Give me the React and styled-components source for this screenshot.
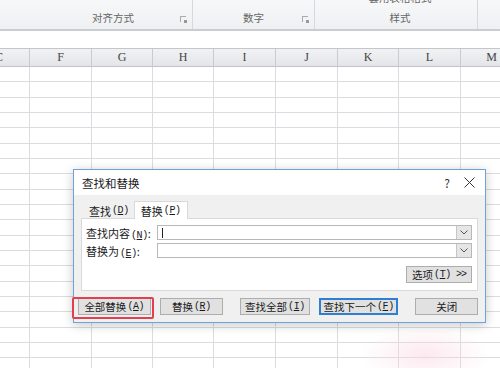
import React from "react";
import styled, { createGlobalStyle } from "styled-components";

const Global = createGlobalStyle`
  html, body { margin: 0; padding: 0; background: #fff; }
  body { font-family: "Noto Sans CJK SC", "Liberation Sans", sans-serif; }
`;

const Page = styled.div`
  position: relative;
  width: 500px;
  height: 368px;
  overflow: hidden;
  background: #fff;
`;

const Ribbon = styled.div`
  display: flex;
  height: 29px;
  background: linear-gradient(#f7f8f9, #eef0f2);
  border-bottom: 2px solid #c9ccd0;
  color: #666;
  font-size: 10.5px;
`;

const Group = styled.div`
  position: relative;
  width: ${(p) => p.$w}px;
  border-right: 1px solid #d6d9dc;
  box-sizing: border-box;
  display: flex;
  align-items: flex-end;
  justify-content: center;
  padding-left: ${(p) => p.$pl || 0}px;
  padding-bottom: 4px;
`;

const GroupLabel = styled.span`
  line-height: 14px;
`;

const TopCut = styled.span`
  position: absolute;
  top: -8px;
  left: 0;
  right: 0;
  text-align: center;
  padding-left: ${(p) => p.$pl || 0}px;
  line-height: 12px;
`;

const Launcher = styled.span`
  position: absolute;
  right: 6px;
  bottom: 7px;
  width: 5px;
  height: 5px;
  border-left: 1px solid #aaa;
  border-top: 1px solid #aaa;
  &::after {
    content: "";
    position: absolute;
    right: -1px;
    bottom: -1px;
    width: 3px;
    height: 3px;
    background: #999;
  }
`;

const FormulaGap = styled.div`
  height: 17px;
  background: #fff;
  border-bottom: 1px solid #c3c6ca;
`;

const Sheet = styled.div`
  margin-left: -31px;
  display: grid;
  grid-template-columns: 61px 62px 61px 61px 62px 62px 61px 62px 62px;
`;

const HeadCell = styled.div`
  height: 17px;
  border-right: 1px solid #c8cbcf;
  border-bottom: 1px solid #c0c3c7;
  background: linear-gradient(#f1f2f4, #e3e5e8);
  display: flex;
  align-items: center;
  justify-content: center;
  font-family: "Liberation Serif", "DejaVu Serif", serif;
  font-size: 12px;
  color: #444;
`;

const Cell = styled.div`
  height: ${(p) => (p.$tall ? 15 : 14)}px;
  border-right: 1px solid #dadcdf;
  border-bottom: 1px solid #dadcdf;
  background: #fff;
`;

const Dialog = styled.div`
  position: absolute;
  left: 73px;
  top: 169px;
  width: 413px;
  height: 154px;
  box-sizing: border-box;
  border: 1px solid #6ea2d8;
  background: #f0f0f0;
  box-shadow: 0 2px 10px rgba(0, 0, 0, 0.22);
  display: flex;
  flex-direction: column;
  font-size: 11px;
  color: #1a1a1a;
`;

const TitleBar = styled.div`
  height: 25px;
  background: #fff;
  display: flex;
  align-items: center;
  padding-left: 8px;
  font-size: 11.5px;
`;

const Title = styled.span`
  flex: 1;
`;

const TitleBtn = styled.span`
  width: ${(p) => p.$w}px;
  display: flex;
  justify-content: center;
  align-items: center;
  font-size: 12px;
  color: #333;
`;

const Body = styled.div`
  flex: 1;
  padding: 5px 7px 0 7px;
  display: flex;
  flex-direction: column;
`;

const Tabs = styled.div`
  display: flex;
  height: 18px;
  padding-left: 5px;
  align-items: flex-end;
`;

const Tab = styled.div`
  height: ${(p) => (p.$active ? 18 : 16)}px;
  box-sizing: border-box;
  padding: 0 ${(p) => (p.$active ? 6 : 2)}px;
  display: flex;
  align-items: center;
  background: ${(p) => (p.$active ? "#fff" : "#f0f0f0")};
  border: 1px solid ${(p) => (p.$active ? "#d9d9d9" : "transparent")};
  border-bottom: none;
  margin-bottom: ${(p) => (p.$active ? -1 : 0)}px;
  margin-left: ${(p) => (p.$active ? 2 : 0)}px;
  position: relative;
  z-index: 1;
  font-size: 11px;
`;

const Panel = styled.div`
  height: 73px;
  box-sizing: border-box;
  background: #fff;
  border: 1px solid #d9d9d9;
  padding: 6px 5px 0 4px;
  display: flex;
  flex-direction: column;
  gap: 3px;
`;

const FieldRow = styled.div`
  display: flex;
  align-items: center;
  height: 15px;
`;

const FieldLabel = styled.span`
  width: 71px;
  font-size: 11px;
  white-space: nowrap;
`;

const Combo = styled.div`
  flex: 1;
  height: 15px;
  box-sizing: border-box;
  border: 1px solid #b8b8b8;
  display: flex;
  align-items: center;
  padding-left: 4px;
  position: relative;
`;

const Caret = styled.span`
  width: 1px;
  height: 10px;
  background: #222;
`;

const DropBtn = styled.span`
  position: absolute;
  right: 0;
  top: 0;
  bottom: 0;
  width: 14px;
  background: #e6e6e6;
  border-left: 1px solid #c6c6c6;
  display: flex;
  align-items: center;
  justify-content: center;
`;

const OptionsRow = styled.div`
  display: flex;
  justify-content: flex-end;
  margin-top: 5px;
`;

const Button = styled.div`
  width: ${(p) => p.$w}px;
  height: 17px;
  box-sizing: border-box;
  background: #e1e1e1;
  border: ${(p) => (p.$primary ? "2px solid #2f7fd0" : "1px solid #adadad")};
  display: flex;
  align-items: center;
  justify-content: center;
  font-size: 10.5px;
  white-space: nowrap;
  margin-left: ${(p) => p.$ml || 0}px;
`;

const ButtonRow = styled.div`
  display: flex;
  margin-top: 7px;
  margin-left: -3px;
`;

const Paren = styled.span`
  font-family: "Liberation Mono", "DejaVu Sans Mono", monospace;
  font-size: 10px;
  letter-spacing: -0.4px;
  margin-left: 1px;
`;

const Key = styled.span`
  text-decoration: underline;
`;

const Arrows = styled.span`
  font-family: "Liberation Mono", "DejaVu Sans Mono", monospace;
  font-size: 10px;
  margin-left: 5px;
  letter-spacing: -1px;
`;

const Highlight = styled.div`
  position: absolute;
  left: 72px;
  top: 297px;
  width: 82px;
  height: 22px;
  box-sizing: border-box;
  border: 2.5px solid #e2404f;
  border-radius: 2px;
`;

const Smear = styled.div`
  position: absolute;
  left: 360px;
  top: 325px;
  width: 130px;
  height: 60px;
  background: radial-gradient(ellipse at center, rgba(250, 215, 225, 0.55), rgba(255, 255, 255, 0) 70%);
`;

const cols = ["C", "F", "G", "H", "I", "J", "K", "L", "M"];
const rowCount = 20;

const Chevron = () => (
  <svg width="8" height="5" viewBox="0 0 8 5">
    <path d="M0.5 0.5 L4 4 L7.5 0.5" fill="none" stroke="#555" strokeWidth="1" />
  </svg>
);

const CloseIcon = () => (
  <svg width="11" height="11" viewBox="0 0 11 11">
    <path d="M0.5 0.5 L10.5 10.5 M10.5 0.5 L0.5 10.5" fill="none" stroke="#333" strokeWidth="1" />
  </svg>
);

const Label = ({ text, k, tail = "" }) => (
  <>
    {text}
    <Paren>
      (<Key>{k}</Key>)
    </Paren>
    {tail}
  </>
);

export default function App() {
  return (
    <>
      <Global />
      <Page>
        <Ribbon>
          <Group $w={193} $pl={34}>
            <GroupLabel>对齐方式</GroupLabel>
            <Launcher />
          </Group>
          <Group $w={122} $pl={-18}>
            <GroupLabel>数字</GroupLabel>
            <Launcher />
          </Group>
          <Group $w={163} $pl={8}>
            <TopCut $pl={8}>套用表格格式</TopCut>
            <GroupLabel>样式</GroupLabel>
          </Group>
        </Ribbon>
        <FormulaGap />
        <Sheet>
          {cols.map((c) => (
            <HeadCell key={c}>{c}</HeadCell>
          ))}
          {Array.from({ length: rowCount }).map((_, r) =>
            cols.map((c) => <Cell key={c + r} $tall={r % 3 === 1} />)
          )}
        </Sheet>

        <Dialog>
          <TitleBar>
            <Title>查找和替换</Title>
            <TitleBtn $w={20}>?</TitleBtn>
            <TitleBtn $w={24}>
              <CloseIcon />
            </TitleBtn>
            <span style={{ width: 4 }} />
          </TitleBar>
          <Body>
            <Tabs>
              <Tab>
                <Label text="查找" k="D" />
              </Tab>
              <Tab $active>
                <Label text="替换" k="P" />
              </Tab>
            </Tabs>
            <Panel>
              <FieldRow>
                <FieldLabel>
                  <Label text="查找内容" k="N" tail=":" />
                </FieldLabel>
                <Combo>
                  <Caret />
                  <DropBtn>
                    <Chevron />
                  </DropBtn>
                </Combo>
              </FieldRow>
              <FieldRow>
                <FieldLabel>
                  <Label text="替换为" k="E" tail=":" />
                </FieldLabel>
                <Combo>
                  <DropBtn>
                    <Chevron />
                  </DropBtn>
                </Combo>
              </FieldRow>
              <OptionsRow>
                <Button $w={66}>
                  <Label text="选项" k="T" />
                  <Arrows>&gt;&gt;</Arrows>
                </Button>
              </OptionsRow>
            </Panel>
            <ButtonRow>
              <Button $w={73}>
                <Label text="全部替换" k="A" />
              </Button>
              <Button $w={64} $ml={9}>
                <Label text="替换" k="R" />
              </Button>
              <Button $w={70} $ml={17}>
                <Label text="查找全部" k="I" />
              </Button>
              <Button $w={80} $ml={9} $primary>
                <Label text="查找下一个" k="F" />
              </Button>
              <Button $w={63} $ml={17}>
                关闭
              </Button>
            </ButtonRow>
          </Body>
        </Dialog>
        <Highlight />
        <Smear />
      </Page>
    </>
  );
}
